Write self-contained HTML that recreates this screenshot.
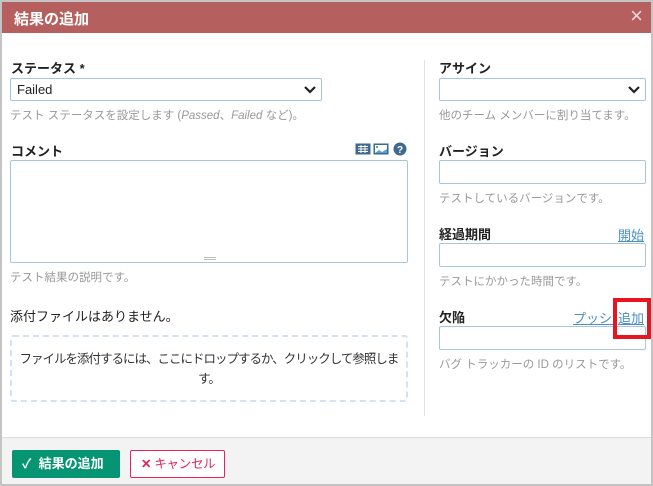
<!DOCTYPE html>
<html><head><meta charset="utf-8"><style>
*{box-sizing:border-box;margin:0;padding:0}
body{width:653px;height:486px;overflow:hidden;background:#fff;font-family:"Liberation Sans","Noto Sans CJK JP",sans-serif;position:relative}
.frame{position:absolute;left:0;top:0;width:653px;height:486px;border:2px solid #c4c4c4;border-right-width:2px}
.hdr{position:absolute;left:2px;top:2px;width:649px;height:31px;background:#b5605e}
.title{position:absolute;left:12px;top:6px;color:#fff;font-weight:bold;font-size:15px}
.close{position:absolute;right:8px;top:2px;color:#f0d8d8;font-size:22px;line-height:24px}
.a{position:absolute;white-space:nowrap}
.lbl{font-size:13px;font-weight:bold;color:#222}
.help{font-size:11.5px;color:#999}
.inp{position:absolute;border:1px solid #a9c6d8;background:#fff;border-radius:2px}
.link{font-size:13px;color:#4a8fc2;text-decoration:underline}
.foot{position:absolute;left:2px;top:437px;width:649px;height:47px;background:#f3f3f3;border-top:1px solid #dcdcdc}
</style></head><body>
<div class="frame"></div>
<div class="hdr"><div class="title">結果の追加</div><div class="close">×</div></div>

<div class="a lbl" style="left:11px;top:58px">ステータス *</div>
<div class="inp" style="left:10px;top:78px;width:312px;height:23px"><span class="a" style="left:6px;top:3px;font-size:13px;color:#222">Failed</span>
<svg class="a" style="right:5px;top:7px" width="12" height="8"><path d="M1 1l5 5 5-5" stroke="#222" stroke-width="2.2" fill="none"/></svg></div>
<div class="a help" style="left:10px;top:107px">テスト ステータスを設定します (<i>Passed</i>、<i>Failed</i> など)。</div>

<div class="a lbl" style="left:11px;top:141px">コメント</div>
<svg class="a" style="left:355px;top:142px" width="54" height="14">
<rect x="0.5" y="1.5" width="15" height="11" fill="#3d6a8e"/><path d="M3 4.5h10M3 7h10M3 9.5h10M6 3v8M10 3v8" stroke="#fff" stroke-width="1"/>
<rect x="18.5" y="1.5" width="15" height="11" fill="#3d6a8e"/><rect x="20" y="3" width="12" height="8" fill="#fff"/><path d="M20 11l4-3 3 2 5-3v4z" fill="#5b9ed0"/><rect x="21" y="4" width="2" height="2" fill="#5bb86a"/>
<circle cx="45" cy="7" r="6.5" fill="#3d6a8e"/><text x="45" y="11" font-size="10" font-weight="bold" fill="#fff" text-anchor="middle" font-family="Liberation Sans">?</text></svg>
<div class="inp" style="left:10px;top:160px;width:398px;height:103px"><div class="a" style="left:193px;bottom:2px;width:12px;height:3px;border-top:1px solid #bbb;border-bottom:1px solid #bbb"></div></div>
<div class="a help" style="left:10px;top:269px">テスト結果の説明です。</div>

<div class="a" style="left:10px;top:306px;font-size:13px;color:#222">添付ファイルはありません。</div>
<div class="a" style="left:10px;top:335px;width:398px;height:67px;border:2px dashed #d3e2ee;border-radius:3px;text-align:center;font-size:12.5px;letter-spacing:-1px;color:#333;line-height:20px;padding-top:12px">ファイルを添付するには、ここにドロップするか、クリックして参照しま<br>す。</div>

<div class="a" style="left:424px;top:60px;width:1px;height:356px;background:#dce4ea"></div>

<div class="a lbl" style="left:439px;top:58px">アサイン</div>
<div class="inp" style="left:439px;top:78px;width:207px;height:23px"><svg class="a" style="right:5px;top:7px" width="12" height="8"><path d="M1 1l5 5 5-5" stroke="#222" stroke-width="2.2" fill="none"/></svg></div>
<div class="a help" style="left:439px;top:107px">他のチーム メンバーに割り当てます。</div>

<div class="a lbl" style="left:439px;top:141px">バージョン</div>
<div class="inp" style="left:439px;top:160px;width:207px;height:24px"></div>
<div class="a help" style="left:439px;top:190px">テストしているバージョンです。</div>

<div class="a lbl" style="left:439px;top:224px">経過期間</div>
<div class="a link" style="left:618px;top:225px">開始</div>
<div class="inp" style="left:439px;top:243px;width:207px;height:24px"></div>
<div class="a help" style="left:439px;top:273px">テストにかかった時間です。</div>

<div class="a lbl" style="left:439px;top:307px">欠陥</div>
<div class="a link" style="left:573px;top:308px;width:40px;overflow:hidden">プッシュ</div>
<div class="a link" style="left:618px;top:308px">追加</div>
<div class="inp" style="left:439px;top:326px;width:207px;height:24px"></div>
<div class="a" style="left:613px;top:298px;width:38px;height:41px;border:4px solid #e8141f"></div>
<div class="a help" style="left:439px;top:356px">バグ トラッカーの ID のリストです。</div>

<div class="foot"></div>
<div class="a" style="left:12px;top:450px;width:108px;height:28px;background:#069572;border-radius:2px;color:#fff;font-size:13px;font-weight:bold;line-height:28px;padding-left:10px">✓&nbsp; 結果の追加</div>
<div class="a" style="left:130px;top:450px;width:95px;height:28px;border:1px solid #e0245e;border-radius:2px;background:#fff;color:#e0245e;font-size:12.5px;line-height:26px;padding-left:10px;letter-spacing:-0.3px"><b>✕</b> キャンセル</div>
</body></html>
